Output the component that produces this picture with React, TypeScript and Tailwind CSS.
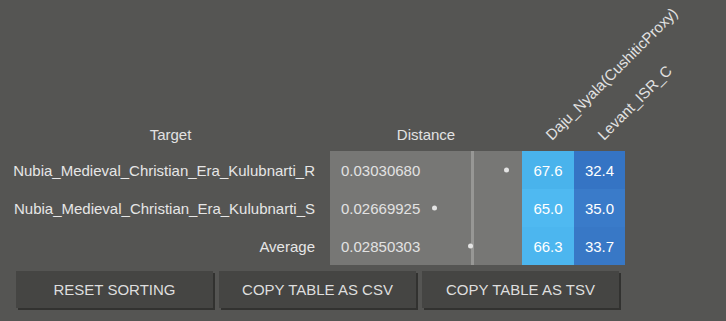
import React from "react";

interface Row {
  target: string;
  distance: number;
  daju: string;
  levant: string;
  dajuBg: string;
  levantBg: string;
}

const AVG = 0.02850303;

const ROWS: Row[] = [
  {
    target: "Nubia_Medieval_Christian_Era_Kulubnarti_R",
    distance: 0.0303068,
    daju: "67.6",
    levant: "32.4",
    dajuBg: "bg-[#49b3ec]",
    levantBg: "bg-[#3574c4]",
  },
  {
    target: "Nubia_Medieval_Christian_Era_Kulubnarti_S",
    distance: 0.02669925,
    daju: "65.0",
    levant: "35.0",
    dajuBg: "bg-[#4fb9f1]",
    levantBg: "bg-[#3a7bc9]",
  },
  {
    target: "Average",
    distance: AVG,
    daju: "66.3",
    levant: "33.7",
    dajuBg: "bg-[#4cb6ef]",
    levantBg: "bg-[#3878c6]",
  },
];

const BUTTONS = ["Reset sorting", "Copy table as CSV", "Copy table as TSV"];

// dot offset inside the distance cell, relative to the average line
const dotLeft = (v: number) => 140.5 + (v - AVG) * 19900 - 2.5;

export default function App() {
  return (
    <div className="w-[726px] h-[321px] bg-[#555553] text-[15px] leading-[17px] text-[#e2e2e2] font-['Liberation_Sans',Arial,sans-serif]">
      {/* Table */}
      <div className="grid grid-cols-[330px_192px_52px_51px]">
        {/* Header row */}
        <div className="h-[151px] flex items-end justify-center pl-[11px] pb-[8px]">Target</div>
        <div className="h-[151px] flex items-end justify-center pb-[8px]">Distance</div>
        <div className="h-[151px] relative">
          <span className="absolute left-[32px] bottom-[8px] origin-bottom-left -rotate-45 whitespace-nowrap">
            Daju_Nyala(CushiticProxy)
          </span>
        </div>
        <div className="h-[151px] relative">
          <span className="absolute left-[32px] bottom-[8px] origin-bottom-left -rotate-45 whitespace-nowrap">
            Levant_ISR_C
          </span>
        </div>

        {/* Body rows */}
        {ROWS.map((r) => (
          <React.Fragment key={r.target}>
            <div className="h-[38px] flex items-center justify-end pr-[15px] text-[#e6e6e6]">{r.target}</div>
            <div className="h-[38px] relative flex items-center pl-[11px] bg-[#777775]">
              <span>{r.distance.toFixed(8)}</span>
              <div className="absolute left-[141px] top-0 bottom-0 w-[3px] bg-[#979795]" />
              <div
                className="absolute top-1/2 -translate-y-1/2 w-[5px] h-[5px] rounded-full bg-[#e4e4e4]"
                style={{ left: dotLeft(r.distance) }}
              />
            </div>
            <div className={`h-[38px] flex items-center justify-center text-white ${r.dajuBg}`}>{r.daju}</div>
            <div className={`h-[38px] flex items-center justify-center text-white ${r.levantBg}`}>{r.levant}</div>
          </React.Fragment>
        ))}
      </div>

      {/* Buttons */}
      <div className="flex gap-[6px] pl-[16px] mt-[6px]">
        {BUTTONS.map((b) => (
          <button
            key={b}
            type="button"
            className="w-[197px] h-[37px] bg-[#454543] shadow-[2px_2px_0_#323230] uppercase text-[#dedede] text-[15px]"
          >
            {b}
          </button>
        ))}
      </div>
    </div>
  );
}
